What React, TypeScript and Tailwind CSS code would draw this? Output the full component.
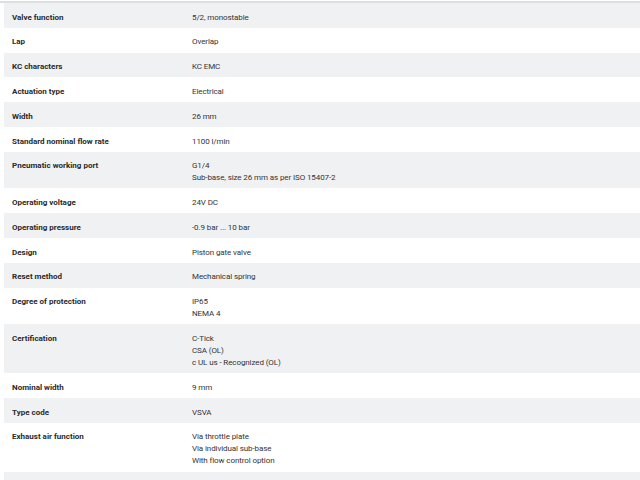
const specs: { label: string; values: string[] }[] = [
  { label: "Valve function", values: ["5/2, monostable"] },
  { label: "Lap", values: ["Overlap"] },
  { label: "KC characters", values: ["KC EMC"] },
  { label: "Actuation type", values: ["Electrical"] },
  { label: "Width", values: ["26 mm"] },
  { label: "Standard nominal flow rate", values: ["1100 l/min"] },
  { label: "Pneumatic working port", values: ["G1/4", "Sub-base, size 26 mm as per ISO 15407-2"] },
  { label: "Operating voltage", values: ["24V DC"] },
  { label: "Operating pressure", values: ["-0.9 bar ... 10 bar"] },
  { label: "Design", values: ["Piston gate valve"] },
  { label: "Reset method", values: ["Mechanical spring"] },
  { label: "Degree of protection", values: ["IP65", "NEMA 4"] },
  { label: "Certification", values: ["C-Tick", "CSA (OL)", "c UL us - Recognized (OL)"] },
  { label: "Nominal width", values: ["9 mm"] },
  { label: "Type code", values: ["VSVA"] },
  { label: "Exhaust air function", values: ["Via throttle plate", "Via individual sub-base", "With flow control option"] },
  { label: "", values: [""] },
];

export default function App() {
  return (
    <div className="w-[640px] h-[480px] overflow-hidden bg-white font-['Roboto',sans-serif] text-[8px] leading-[12px] text-[#333]">
      <div className="mt-px h-[2px] bg-[#dcdee1]" />
      <div className="ml-1">
        {specs.map((s, i) => (
          <div key={i} className={`flex pt-[8.6px] pb-[4.2px] ${i % 2 === 0 ? "bg-[#f0f1f3]" : "bg-white"}`}>
            <div className="w-[188px] pl-2 font-bold text-[#2a2a2a]">{s.label}</div>
            <div className="flex-1 tracking-[-0.1px]">
              {s.values.map((v, j) => (
                <div key={j} className="min-h-[12px]">{v}</div>
              ))}
            </div>
          </div>
        ))}
      </div>
    </div>
  );
}
